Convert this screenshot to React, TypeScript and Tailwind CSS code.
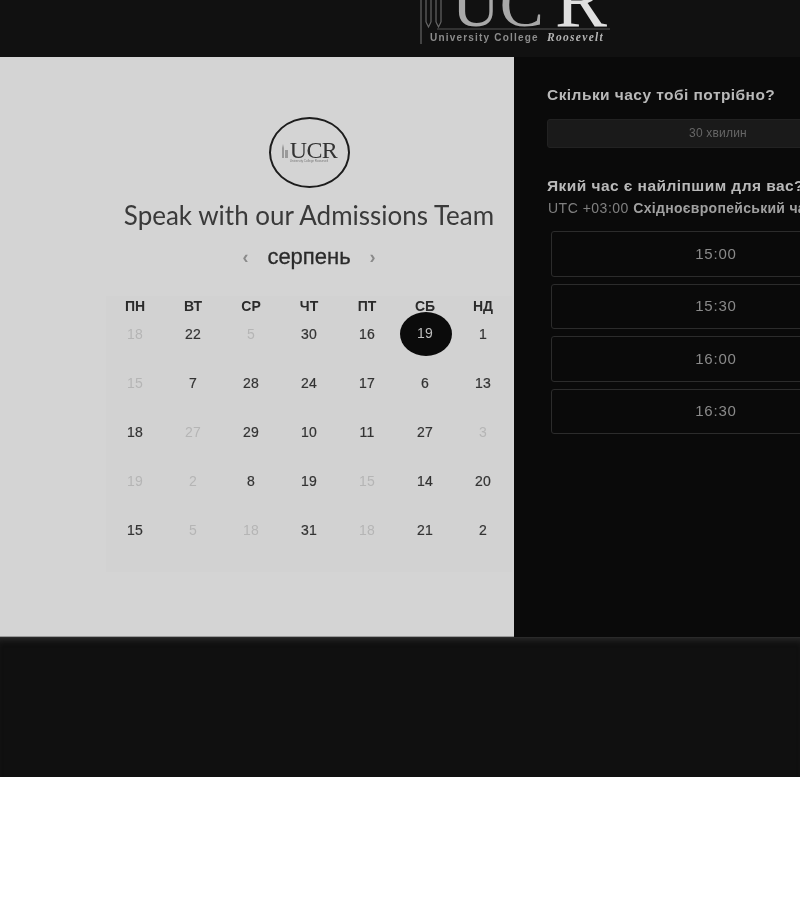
import React from "react";

const days: [string, boolean][][] = [
  [["18", false], ["22", true], ["5", false], ["30", true], ["16", true], ["19", true], ["1", true]],
  [["15", false], ["7", true], ["28", true], ["24", true], ["17", true], ["6", true], ["13", true]],
  [["18", true], ["27", false], ["29", true], ["10", true], ["11", true], ["27", true], ["3", false]],
  [["19", false], ["2", false], ["8", true], ["19", true], ["15", false], ["14", true], ["20", true]],
  [["15", true], ["5", false], ["18", false], ["31", true], ["18", false], ["21", true], ["2", true]],
];
const heads = ["ПН", "ВТ", "СР", "ЧТ", "ПТ", "СБ", "НД"];
const times = ["15:00", "15:30", "16:00", "16:30"];

function HeaderLogo() {
  return (
    <svg width="200" height="57" viewBox="0 0 200 57" className="block blur-[0.4px]">
      <g fill="none" stroke="#666" strokeWidth="1.2">
        <path d="M4 0V44M9 0V22M14 0V22M19 0V22M24 0V22" />
        <path d="M9 22L11.5 27L14 22M19 22L21.5 27L24 22" />
      </g>
      <path d="M20 29H193" stroke="#555" strokeWidth="1" />
      <text x="35" y="26" fontFamily="Liberation Serif" fontSize="66" fill="#a8a8a8">UC</text>
      <text x="138" y="26" fontFamily="Liberation Serif" fontSize="78" fill="#e0e0e0">R</text>
      <text x="13" y="41" fontFamily="Liberation Sans" fontSize="10" fontWeight="700" letterSpacing="1.2" fill="#8c8c8c">University College</text>
      <text x="130" y="41" fontFamily="Liberation Serif" fontSize="11.5" fontWeight="700" fontStyle="italic" letterSpacing="1.3" fill="#b5b5b5">Roosevelt</text>
    </svg>
  );
}

function RoundLogo() {
  return (
    <div className="w-[81px] h-[71px] rounded-[50%] border-[2.5px] border-[#1c1c1c] flex items-center justify-center">
      <div className="flex flex-col items-center">
        <div className="flex items-end">
          <svg width="8" height="15" viewBox="0 0 8 15" className="mr-[1px] mb-[1px]">
            <path d="M1 15V5L2 1L3 5V15M4 15V7H7V15" fill="#9a9a9a" />
          </svg>
          <span className="font-['Liberation_Serif',serif] text-[24px] tracking-[-0.6px] text-[#333] leading-[17px]">
            UCR
          </span>
        </div>
        <span className="mt-[1px] font-['Liberation_Sans',sans-serif] text-[3px] text-[#777] leading-[3px]">
          University College Roosevelt
        </span>
      </div>
    </div>
  );
}

export default function App() {
  return (
    <div className="w-[800px] h-[900px] overflow-hidden bg-white font-['Liberation_Sans',sans-serif]">
      <header className="h-[57px] bg-[#111111] flex justify-center overflow-hidden pl-[234px]">
        <HeaderLogo />
      </header>
      <main className="h-[581px] flex bg-[#0a0a0a] border-b border-[#2a2a2a] overflow-hidden">
        <section className="w-[514px] shrink-0 bg-[#d4d4d4] border-b border-[#999] flex flex-col items-center pl-[106px] pr-[2px] pt-[60px]">
          <div className="w-full flex flex-col items-center blur-[0.4px]">
            <RoundLogo />
            <h1 className="mt-[12px] font-['Lato',sans-serif] text-[26px] leading-[30px] text-[#3a3a3a] whitespace-nowrap">
              Speak with our Admissions Team
            </h1>
            <div className="mt-[13px] h-[28px] flex items-center gap-[19px] text-[#2a2a2a]">
              <span className="text-[#8a8a8a] text-[18px] font-bold leading-none">‹</span>
              <span className="text-[22px] leading-none font-medium [-webkit-text-stroke:0.3px_#2a2a2a]">серпень</span>
              <span className="text-[#8a8a8a] text-[18px] font-bold leading-none">›</span>
            </div>
            <div className="w-full mt-[25px] bg-[#d2d2d2] pb-[5px]">
              <div className="grid grid-cols-7 text-center">
                {heads.map((h) => (
                  <div key={h} className="h-[26px] text-[14px] leading-[20px] font-bold text-[#2b2b2b]">
                    {h}
                  </div>
                ))}
              </div>
              <div className="grid grid-cols-7 grid-rows-[repeat(5,49px)] text-center text-[14px]">
                {days.flat().map(([d, active], i) => (
                  <div key={i} className="relative h-[49px] flex justify-center">
                    {i === 5 && (
                      <div className="absolute top-[-10px] left-[4px] w-[52px] h-[44px] rounded-[50%] bg-[#0b0b0b]" />
                    )}
                    <span
                      className={
                        "relative leading-[24px] tracking-[0.3px] " +
                        (i === 5
                          ? "text-[#bdbdbd] top-[-1px]"
                          : active
                            ? "text-[#333333] [-webkit-text-stroke:0.2px_#333333]"
                            : "text-[#b5b5b5]")
                      }
                    >
                      {d}
                    </span>
                  </div>
                ))}
              </div>
            </div>
          </div>
        </section>
        <section className="flex-1 min-w-0 pl-[33px] pt-[28px]">
          <div className="blur-[0.4px]">
            <h2 className="text-[15.5px] leading-[20px] font-bold text-[#b9b9b9] tracking-[0.45px] whitespace-nowrap">
              Скільки часу тобі потрібно?
            </h2>
            <div className="mt-[14px] w-[342px] h-[29px] rounded-[3px] bg-[#1a1a1a] border border-[#222] flex items-center justify-center text-[12px] tracking-[0.2px] text-[#666666] pb-[1px]">
              30 хвилин
            </div>
            <h2 className="mt-[28px] text-[15.5px] leading-[20px] font-bold text-[#b9b9b9] tracking-[0.45px] whitespace-nowrap">
              Який час є найліпшим для вас?
            </h2>
            <div className="mt-[3px] pl-[1px] text-[14px] leading-[18px] text-[#808080] tracking-[0.5px] whitespace-nowrap">
              UTC +03:00 <span className="font-bold text-[#a0a0a0] tracking-[0.3px]">Східноєвропейський час</span>
            </div>
            <div className="mt-[14px] ml-[4px] w-[330px] flex flex-col gap-[7px]">
              {times.map((t) => (
                <div
                  key={t}
                  className="h-[45.5px] rounded-[3px] border border-[#2c2c2c] flex items-center justify-center text-[15px] text-[#8a8a8a] tracking-[0.8px]"
                >
                  {t}
                </div>
              ))}
            </div>
          </div>
        </section>
      </main>
      <footer className="h-[139px] bg-[#101010] shadow-[inset_0_6px_6px_-4px_#2a2a2a]" />
    </div>
  );
}
